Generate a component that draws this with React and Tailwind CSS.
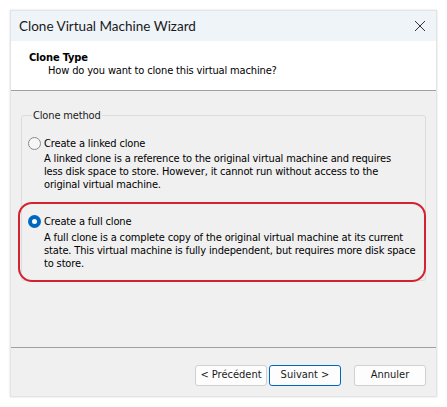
import React from "react";

const body = { fontFamily: '"DejaVu Sans Condensed", "DejaVu Sans", sans-serif' };

function Radio({ checked }) {
  return checked ? (
    <span className="w-[13px] h-[13px] rounded-full bg-[#0067c0] flex items-center justify-center shrink-0">
      <span className="w-[5px] h-[5px] rounded-full bg-white" />
    </span>
  ) : (
    <span className="w-[13px] h-[13px] rounded-full border border-[#8a8a8a] bg-[#f6f6f6] shrink-0" />
  );
}

export default function App() {
  return (
    <div className="w-[447px] h-[407px] bg-white p-[10px]">
      <div className="w-[427px] h-[387px] flex flex-col bg-[#f0f0f0] border border-[#e4e4e4] shadow-[0_0_2px_rgba(0,0,0,0.15)]">
        <div className="h-[30px] bg-[#eff4f9] flex items-center justify-between pl-[8px] pr-[10px]">
          <span className="text-[13.5px] text-[#1a1a1a]" style={{ fontFamily: 'Lato, sans-serif' }}>
            Clone Virtual Machine Wizard
          </span>
          <svg width="12" height="12" viewBox="0 0 12 12">
            <path d="M1 1 L11 11 M11 1 L1 11" stroke="#333" strokeWidth="1" />
          </svg>
        </div>
        <div className="h-[50px] bg-white border-b border-[#a0a0a0] pt-[10px] pl-[18px] text-[11px] leading-[13px] text-black tracking-[-0.15px]" style={body}>
          <div className="font-bold">Clone Type</div>
          <div className="pl-[19px]">How do you want to clone this virtual machine?</div>
        </div>
        <div className="flex-1 px-[10px] pt-[18px]" style={body}>
          <fieldset className="border border-[#dcdcdc] rounded-[3px] pl-[6px] pr-[10px] pb-0 text-[11px] leading-[13px] text-black tracking-[-0.15px]">
            <legend className="px-[1px] ml-[4px] text-[#1a1a1a]">Clone method</legend>
            <div className="mt-[15px] flex items-center gap-[3px]">
              <Radio />
              <span>Create a linked clone</span>
            </div>
            <div className="pl-[16px] pr-[16px] mt-[2px]">
              A linked clone is a reference to the original virtual machine and requires less disk space to store. However, it cannot run without access to the original virtual machine.
            </div>
            <div className="mt-[11px] -ml-[10px] mr-[-11px] mb-[-2px] border-2 border-[#d42330] rounded-[14px] pl-[8px] pr-[2px] pt-[11px] pb-[10px]">
              <div className="flex items-center gap-[3px]">
                <Radio checked />
                <span>Create a full clone</span>
              </div>
              <div className="pl-[16px] mt-[3px]">
                A full clone is a complete copy of the original virtual machine at its current state. This virtual machine is fully independent, but requires more disk space to store.
              </div>
            </div>
          </fieldset>
        </div>
        <div className="h-[49px] border-t border-[#a0a0a0] flex items-start justify-end pt-[17px] pr-[10px] text-[11px]" style={body}>
          <button className="w-[72px] h-[21px] bg-[#fdfdfd] border border-[#d0d0d0] rounded-[3px] text-[#1a1a1a]">&lt; Précédent</button>
          <button className="ml-[2px] w-[72px] h-[21px] bg-[#fdfdfd] border border-[#0067c0] rounded-[3px] text-[#1a1a1a]">Suivant &gt;</button>
          <button className="ml-[13px] w-[72px] h-[21px] bg-[#fdfdfd] border border-[#d0d0d0] rounded-[3px] text-[#1a1a1a]">Annuler</button>
        </div>
      </div>
    </div>
  );
}
